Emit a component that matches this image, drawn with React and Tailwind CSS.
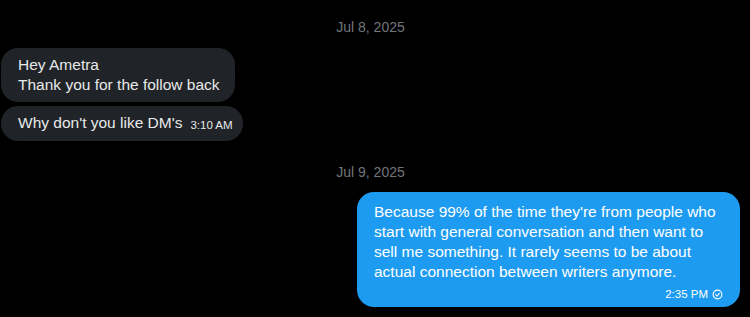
import React from "react";

function CheckCircle() {
  return (
    <svg width="11" height="11" viewBox="0 0 24 24" fill="none" stroke="currentColor" strokeWidth="2.4" strokeLinecap="round" strokeLinejoin="round">
      <circle cx="12" cy="12" r="9.5" />
      <path d="M8 12.5l3 3 5-6" />
    </svg>
  );
}

export default function App() {
  const font = { fontFamily: '"Liberation Sans", Arial, sans-serif' };
  return (
    <div className="w-[750px] h-[317px] bg-black overflow-hidden text-[#e7e9ea]" style={font}>
      <div className="flex flex-col pl-px pr-[10px] pt-[19px]">
        <div className="text-center text-[14px] leading-[16px] text-[#71767b]">Jul 8, 2025</div>
        <div className="mt-[13px] flex flex-col items-start gap-[4px]">
          <div className="rounded-[17px] bg-[#202327] pl-[17px] pr-[16px] pt-[7px] pb-[7px] text-[15.5px] leading-[20px] w-[234px]">
            <div>Hey Ametra</div>
            <div className="whitespace-nowrap">Thank you for the follow back</div>
          </div>
          <div className="rounded-[17px] bg-[#202327] pl-[17px] pr-[15px] pt-[7px] pb-[8px] text-[15.5px] leading-[20px] flex items-end w-[242px]">
            <span className="whitespace-nowrap">Why don't you like DM's</span>
            <span className="ml-[8px] text-[11.5px] leading-[16px] whitespace-nowrap">3:10 AM</span>
          </div>
        </div>
        <div className="mt-[23px] text-center text-[14px] leading-[16px] text-[#71767b]">Jul 9, 2025</div>
        <div className="mt-[12px] flex justify-end">
          <div className="w-[383px] rounded-[17px] bg-[#1d9bf0] text-white pl-[17px] pr-[17px] pt-[10px] pb-[5px]">
            <div className="text-[15.5px] leading-[20px] whitespace-nowrap">
              <div>Because 99% of the time they're from people who</div>
              <div>start with general conversation and then want to</div>
              <div>sell me something. It rarely seems to be about</div>
              <div>actual connection between writers anymore.</div>
            </div>
            <div className="mt-[4px] flex justify-end items-center gap-[4px] text-[11.5px] leading-[16px]">
              <span>2:35 PM</span>
              <CheckCircle />
            </div>
          </div>
        </div>
      </div>
    </div>
  );
}
